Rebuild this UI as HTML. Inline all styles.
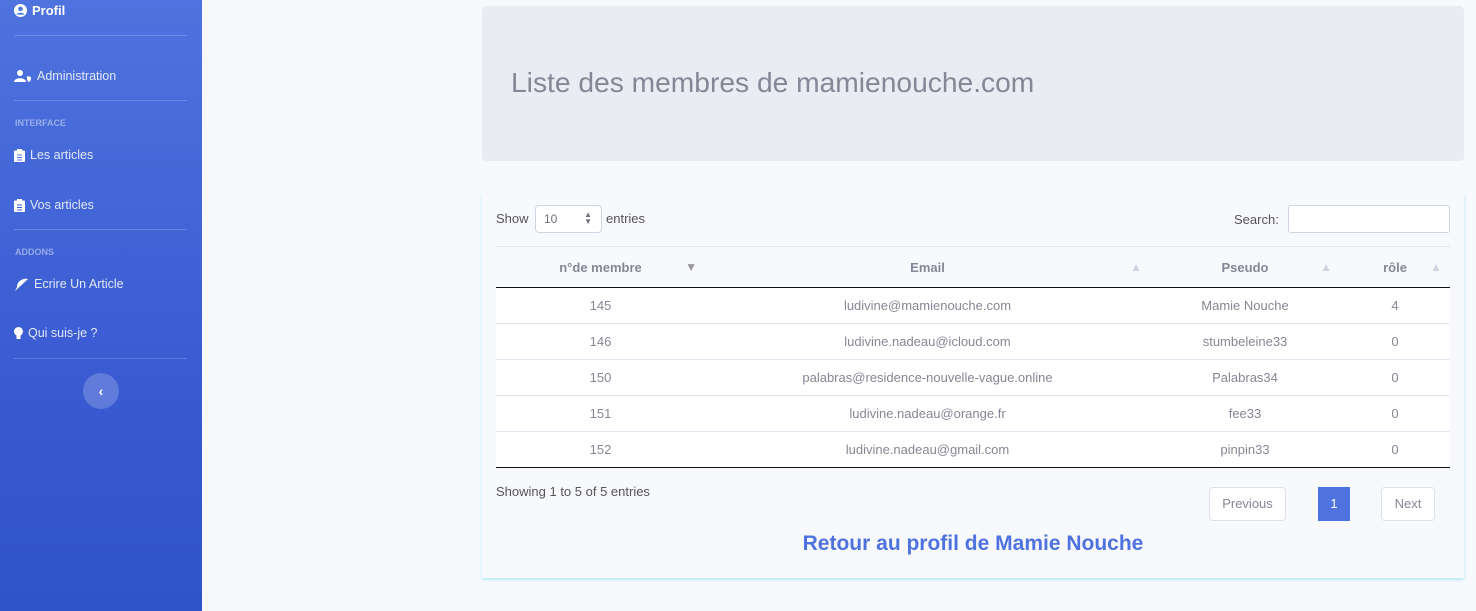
<!DOCTYPE html>
<html><head><meta charset="utf-8"><style>
*{box-sizing:border-box;margin:0;padding:0}
body{width:1476px;height:611px;overflow:hidden;background:#f8f9fc;font-family:"Liberation Sans",sans-serif;position:relative}
.sb{position:absolute;left:0;top:0;width:202px;height:611px;background:linear-gradient(180deg,#4e73df 0%,#3a5bd2 60%,#2f53c8 100%)}
.sb .it{position:absolute;left:14px;color:rgba(255,255,255,.85);font-size:12.5px;display:flex;align-items:center;gap:5px}
.sb hr{position:absolute;left:14px;width:173px;border:0;border-top:1px solid rgba(255,255,255,.2)}
.sb .hd{position:absolute;left:15px;font-size:9px;font-weight:bold;color:rgba(255,255,255,.45)}
.hdr{position:absolute;left:482px;top:6px;width:982px;height:155px;background:#eaecf4;border-radius:4px}
.hdr h1{position:absolute;left:29px;top:60px;font-weight:normal;font-size:28.2px;color:#858796}
.card{position:absolute;left:482px;top:193px;width:982px;height:385px;background:#f8f9fc;box-shadow:0 2px 3px #b5e9f7}
.t{position:absolute;font-size:13px;color:#555}
table{position:absolute;left:14px;top:53px;width:954px;border-collapse:collapse;font-size:13px;color:#858796}
th{height:41px;border-top:1px solid #e3e6f0;border-bottom:1px solid #111;font-weight:bold;position:relative;text-align:center}
th span{position:absolute;right:8px;top:13px;font-size:12px;color:#d1d3e2}
td{height:36px;text-align:center;background:#fff;border-top:1px solid #e3e6f0}
tr:last-child td{border-bottom:1px solid #111}
.pb{position:absolute;top:294px;height:34px;border:1px solid #dddfeb;border-radius:4px;background:#fff;color:#858796;font-size:13px;text-align:center;line-height:32px}
</style></head><body>
<div class="sb">
<div class="it" style="top:3px;color:#fff;font-weight:bold;font-size:13px"><svg width="13" height="13" viewBox="0 0 16 16"><circle cx="8" cy="8" r="8" fill="#fff"/><circle cx="8" cy="6" r="2.8" fill="#4e73df"/><path d="M3 13c1.5-3 8.5-3 10 0" fill="#4e73df"/></svg>Profil</div>
<hr style="top:35px">
<div class="it" style="top:69px"><svg width="18" height="12" viewBox="0 0 18 12"><circle cx="6" cy="3" r="3" fill="#fff"/><path d="M0 12c0-5 12-5 12 0z" fill="#fff"/><path d="M13 6l4 1v2c0 2-2 3-2 3s-2-1-2-3z" fill="#fff"/></svg>Administration</div>
<hr style="top:100px">
<div class="hd" style="top:118px">INTERFACE</div>
<div class="it" style="top:148px"><svg width="11" height="13" viewBox="0 0 11 13"><rect x="0" y="1.5" width="11" height="11.5" rx="1" fill="#fff"/><rect x="3" y="0" width="5" height="3" fill="#fff"/><path d="M3 6h5M3 8.5h5M3 11h5" stroke="#4e73df"/></svg>Les articles</div>
<div class="it" style="top:198px"><svg width="11" height="13" viewBox="0 0 11 13"><rect x="0" y="1.5" width="11" height="11.5" rx="1" fill="#fff"/><rect x="3" y="0" width="5" height="3" fill="#fff"/><path d="M3 6h5M3 8.5h5M3 11h5" stroke="#3f62d6"/></svg>Vos articles</div>
<hr style="top:229px">
<div class="hd" style="top:247px">ADDONS</div>
<div class="it" style="top:277px"><svg width="15" height="13" viewBox="0 0 15 13"><path d="M1 13L14 1C9 0 3 3 3 9z" fill="#fff"/></svg>Ecrire Un Article</div>
<div class="it" style="top:326px"><svg width="9" height="13" viewBox="0 0 9 13"><circle cx="4.5" cy="4.5" r="4.5" fill="#fff"/><rect x="2.5" y="8" width="4" height="4" fill="#fff"/></svg>Qui suis-je ?</div>
<hr style="top:358px">
<div style="position:absolute;left:83px;top:373px;width:36px;height:36px;border-radius:50%;background:rgba(255,255,255,.2);color:#fff;text-align:center;line-height:36px;font-size:14px;font-weight:bold">‹</div>
</div>
<div class="hdr"><h1>Liste des membres de mamienouche.com</h1></div>
<div class="card">
<div class="t" style="left:14px;top:18px">Show</div>
<div style="position:absolute;left:53px;top:12px;width:67px;height:28px;border:1px solid #d1d3e2;border-radius:4px;background:#fff;font-size:12px;color:#6e707e;padding:6px 8px">10<span style="position:absolute;right:9px;top:5px;font-size:8px;line-height:7px">▲<br>▼</span></div>
<div class="t" style="left:124px;top:18px">entries</div>
<div class="t" style="left:752px;top:19px">Search:</div>
<div style="position:absolute;left:806px;top:12px;width:162px;height:28px;border:1px solid #d1d3e2;border-radius:3px;background:#fff"></div>
<table>
<tr><th style="width:209px">n°de membre<span style="color:#999">▼</span></th><th style="width:445px">Email<span>▲</span></th><th style="width:190px">Pseudo<span>▲</span></th><th>rôle<span>▲</span></th></tr>
<tr><td>145</td><td>ludivine@mamienouche.com</td><td>Mamie Nouche</td><td>4</td></tr>
<tr><td>146</td><td>ludivine.nadeau@icloud.com</td><td>stumbeleine33</td><td>0</td></tr>
<tr><td>150</td><td>palabras@residence-nouvelle-vague.online</td><td>Palabras34</td><td>0</td></tr>
<tr><td>151</td><td>ludivine.nadeau@orange.fr</td><td>fee33</td><td>0</td></tr>
<tr><td>152</td><td>ludivine.nadeau@gmail.com</td><td>pinpin33</td><td>0</td></tr>
</table>
<div class="t" style="left:14px;top:291px">Showing 1 to 5 of 5 entries</div>
<div class="pb" style="left:727px;width:77px">Previous</div>
<div class="pb" style="left:836px;width:32px;background:#4e73df;border-color:#4e73df;color:#fff;border-radius:0">1</div>
<div class="pb" style="left:899px;width:54px">Next</div>
<div style="position:absolute;left:0;width:982px;top:339px;text-align:center;font-size:21px;font-weight:bold;color:#4e73df">Retour au profil de Mamie Nouche</div>
</div>
</body></html>
